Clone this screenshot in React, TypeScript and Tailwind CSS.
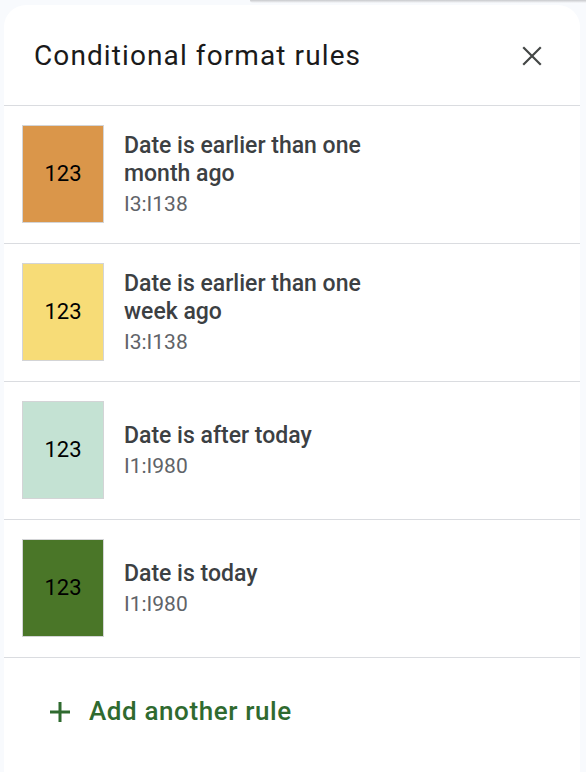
import React from 'react'

const rules = [
  { color: 'bg-[#da964a]', title: ['Date is earlier than one', 'month ago'], range: 'I3:I138' },
  { color: 'bg-[#f7dc77]', title: ['Date is earlier than one', 'week ago'], range: 'I3:I138' },
  { color: 'bg-[#c4e2d3]', title: ['Date is after today'], range: 'I1:I980' },
  { color: 'bg-[#4a7628]', title: ['Date is today'], range: 'I1:I980' },
]

const App = () => {
  return (
    <div className="min-h-[772px] w-[586px] overflow-hidden bg-[#f8fafd] font-['Roboto',sans-serif]">
      {/* sliver of the toolbar shadow above the panel */}
      <div className="h-[5px] flex">
        <div className="ml-[250px] flex-1 h-[3px] bg-gradient-to-b from-[#c8c9cc] to-[#f8fafd] rounded-bl-[6px]"></div>
      </div>
      <div className="ml-[4px] mr-[6px] bg-white rounded-t-[22px] min-h-[767px]">
        <div className="flex items-center justify-between pl-[30px] pr-[38px] h-[101px] border-b border-[#dadce0]">
          <h1 className="text-[28px] text-[#1a1a1a] tracking-[1.1px] pt-[2px]">Conditional format rules</h1>
          <svg width="20" height="20" viewBox="0 0 20 20" className="mt-[1px]">
            <path d="M2 2 L18 18 M18 2 L2 18" stroke="#444746" strokeWidth="2.2" strokeLinecap="square" />
          </svg>
        </div>
        {rules.map((rule, index) => (
          <div key={index} className="flex items-center h-[138px] border-b border-[#dadce0] pl-[18px]">
            <div className={`${rule.color} w-[82px] h-[98px] border border-[#d3d4d6] flex items-center justify-center text-[22px] text-black mb-[2px]`}>
              123
            </div>
            <div className="ml-[20px] pt-[2px]">
              {rule.title.map((line, i) => (
                <p key={i} className="text-[23px] leading-[28px] font-medium text-[#3c4043]">{line}</p>
              ))}
              <p className="text-[21px] leading-[32px] text-[#5f6368]">{rule.range}</p>
            </div>
          </div>
        ))}
        <div className="flex items-center pl-[43px] pt-[34px] gap-[16px] text-[#2f6a2f]">
          <svg width="26" height="26" viewBox="0 0 26 26">
            <path d="M13 3 V23 M3 13 H23" stroke="currentColor" strokeWidth="3" />
          </svg>
          <span className="text-[26px] font-medium tracking-[0.6px]">Add another rule</span>
        </div>
      </div>
    </div>
  )
}

export default App
